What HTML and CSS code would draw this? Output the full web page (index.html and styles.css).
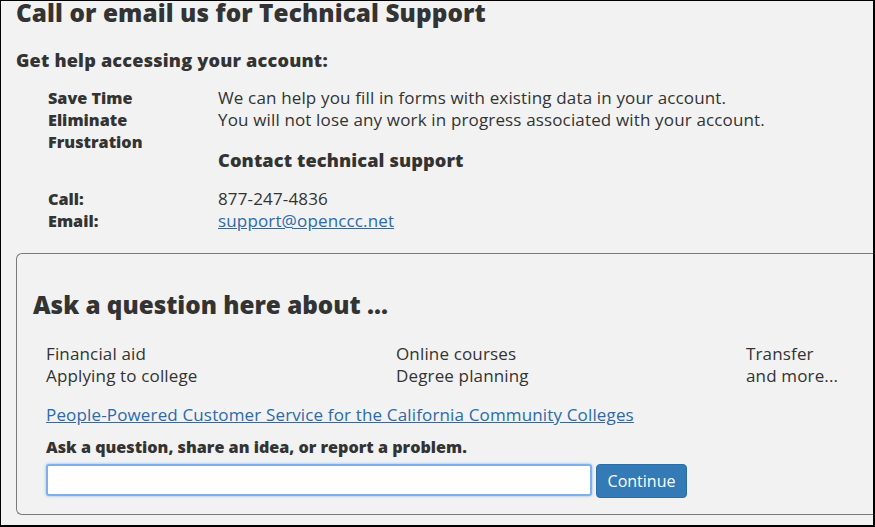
FILE: index.html
```html
<!DOCTYPE html>
<html lang="en">
<head>
<meta charset="utf-8">
<title>Technical Support</title>
<link rel="stylesheet" href="styles.css">
</head>
<body>
<div class="frame">
  <h1 class="title">Call or email us for Technical Support</h1>
  <h2 class="subtitle">Get help accessing your account:</h2>
  <div class="info">
    <div class="label">Save Time</div>
    <div class="value">We can help you fill in forms with existing data in your account.</div>
    <div class="label">Eliminate Frustration</div>
    <div class="value">You will not lose any work in progress associated with your account.
      <h3 class="contact-head">Contact technical support</h3>
    </div>
    <div class="label">Call:</div>
    <div class="value">877-247-4836</div>
    <div class="label">Email:</div>
    <div class="value"><a class="link" href="#">support@openccc.net</a></div>
  </div>
  <div class="ask-box">
    <h2 class="ask-title">Ask a question here about ...</h2>
    <div class="ask-body">
      <div class="topics">
        <div>Financial aid<br>Applying to college</div>
        <div>Online courses<br>Degree planning</div>
        <div>Transfer<br>and more...</div>
      </div>
      <a class="link ppl" href="#">People-Powered Customer Service for the California Community Colleges</a>
      <div class="ask-label">Ask a question, share an idea, or report a problem.</div>
      <div class="ask-row">
        <input class="ask-input" type="text">
        <button class="btn">Continue</button>
      </div>
    </div>
  </div>
</div>
</body>
</html>
```
FILE: styles.css
```css
html, body {
  margin: 0;
  padding: 0;
}
body {
  font-family: "Open Sans", "Liberation Sans", sans-serif;
  color: #333;
  background: #f2f2f2;
}
.frame {
  box-sizing: border-box;
  height: 527px;
  border-top: 1px solid #000;
  border-left: 1px solid #000;
  border-right: 2px solid #000;
  border-bottom: 2px solid #000;
  padding-left: 15px;
  background: #f2f2f2;
}
.title {
  margin: 0;
  font-size: 24.3px;
  font-weight: 800;
  line-height: 24px;
  letter-spacing: 0.1px;
}
.subtitle {
  margin: 24px 0 0;
  font-size: 18.1px;
  font-weight: 800;
  line-height: 22px;
  letter-spacing: 0.2px;
}
.info {
  display: grid;
  grid-template-columns: 170px 1fr;
  margin: 16px 0 0 32px;
  font-size: 17px;
  line-height: 22px;
  letter-spacing: 0.15px;
}
.label {
  font-weight: 800;
  font-size: 16.2px;
  letter-spacing: 0;
  width: 110px;
}
.contact-head {
  margin: 18px 0 17px;
  font-size: 18.2px;
  font-weight: 800;
  line-height: 22px;
  letter-spacing: 0.1px;
}
.link {
  color: #2a6aad;
  text-decoration: underline;
}
.ask-box {
  margin-top: 21px;
  border: 1px solid #7a7a7a;
  border-right: none;
  border-radius: 6px 0 0 6px;
  padding: 36px 0 18px 16px;
  height: 262px;
  box-sizing: border-box;
}
.ask-title {
  margin: 0;
  font-size: 24.25px;
  font-weight: 800;
  line-height: 30px;
}
.ask-body {
  margin-left: 13px;
  font-size: 17px;
  line-height: 22px;
  letter-spacing: 0.15px;
}
.topics {
  display: grid;
  grid-template-columns: 350px 350px 1fr;
  margin-top: 23px;
}
.ppl {
  display: inline-block;
  margin-top: 17px;
}
.ask-label {
  margin-top: 10px;
  font-weight: 800;
  font-size: 16.15px;
  letter-spacing: 0;
}
.ask-row {
  display: flex;
  align-items: flex-start;
  gap: 4px;
  margin-top: 6px;
}
.ask-input {
  box-sizing: border-box;
  width: 546px;
  height: 32px;
  border: 2px solid #7fb0ea;
  border-radius: 3px;
  background: #fff;
  box-shadow: 0 0 3px #8ab8f0;
  margin: 0;
}
.btn {
  box-sizing: border-box;
  width: 91px;
  height: 34px;
  background: #337ab7;
  color: #fff;
  border: 1px solid #2e6da4;
  border-radius: 4px;
  font-family: inherit;
  font-size: 16px;
  padding: 0;
}
```
